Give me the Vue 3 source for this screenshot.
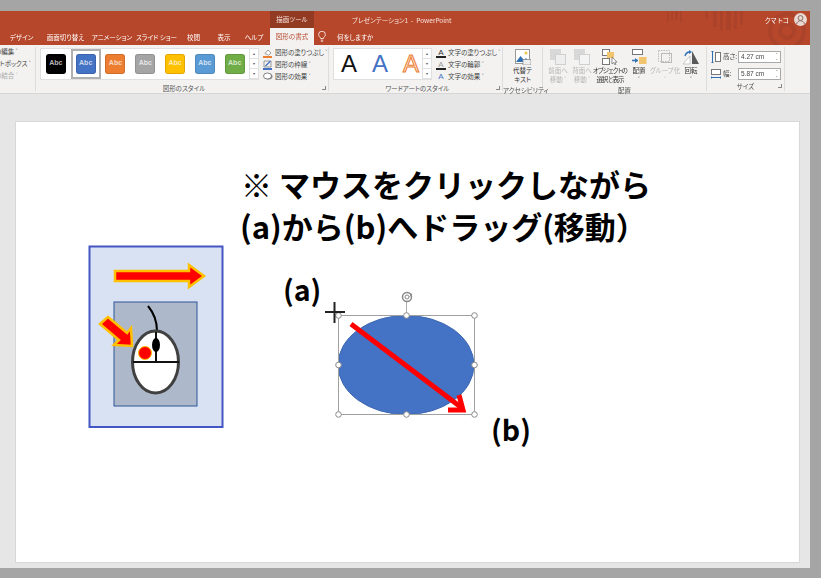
<template>
  <div class="window">
    <!-- タイトルバー -->
    <header class="title-bar">
      <svg class="title-deco" width="150" height="34" viewBox="0 0 150 34">
        <g fill="#ab432a">
          <rect x="7" y="0" width="2" height="11" />
          <rect x="11" y="0" width="2" height="10" />
          <rect x="15" y="0" width="3" height="9" />
          <rect x="20" y="0" width="2" height="11" />
          <rect x="45" y="0" width="3" height="8" />
          <rect x="53" y="0" width="4" height="16" />
          <rect x="60" y="0" width="3" height="19" />
          <rect x="66" y="0" width="5" height="19" />
          <rect x="74" y="0" width="3" height="18" />
          <rect x="80" y="0" width="3" height="14" />
        </g>
        <g fill="none" stroke="#ab432a">
          <circle cx="127" cy="20" r="17" stroke-width="4" />
          <circle cx="127" cy="20" r="7" stroke-width="4" />
        </g>
      </svg>
      <div class="context-tool">描画ツール</div>
      <div class="doc-title">プレゼンテーション1&nbsp;&nbsp;-&nbsp;&nbsp;PowerPoint</div>
      <div class="user">
        <span>クマ トコ</span>
        <svg width="13" height="13" viewBox="0 0 13 13">
          <circle cx="6.5" cy="6.5" r="6.5" fill="#e9d9d3" />
          <circle cx="6.5" cy="5" r="2.4" fill="none" stroke="#8c6f66" />
          <path d="M2.6 11c.6-2.400 2.200-3.200 3.900-3.200s3.300.8 3.900 3.200" fill="none" stroke="#8c6f66" />
        </svg>
      </div>
    </header>

    <!-- タブ -->
    <nav class="tabs">
      <span v-for="tab in tabs" :key="tab" class="tab" :class="{ active: tab === '図形の書式' }">{{ tab }}</span>
      <svg class="bulb" width="8" height="11" viewBox="0 0 8 11" fill="none" stroke="#fff" stroke-width=".8">
        <path d="M2.600 7.500C2.400 6 .6 5.400.6 3.600a3.400 3.400 0 0 1 6.800 0C7.400 5.400 5.600 6 5.400 7.500z" />
        <path d="M2.800 9.200h2.400M3.300 10.500h1.400" />
      </svg>
      <span class="tell-me">何をしますか</span>
    </nav>

    <!-- リボン -->
    <section class="ribbon">
      <div class="group group-cut">
        <div class="cut-list">
          <span>図形の編集 ˅</span>
          <span>テキストボックス ˅</span>
          <span class="muted">図形の結合 ˅</span>
        </div>
      </div>

      <div class="group group-shape">
        <div class="group-body">
          <div class="gallery shape-gallery">
            <div v-for="item in shapeStyles" :key="item.color" class="style-cell" :class="{ selected: item.selected }">
              <span class="swatch" :style="{ background: item.color }">Abc</span>
            </div>
            <div class="scroller">
              <span>▴</span><span>▾</span><span>▾</span>
            </div>
          </div>
          <ul class="commands">
            <li>
              <svg width="10" height="10" viewBox="0 0 10 10">
                <path d="M2 5.500 5 2l3 3-2.500 2.200z" fill="#fff" stroke="#777" stroke-width=".7" />
                <rect x="0" y="8" width="9" height="2" fill="#ed7d31" />
              </svg>
              図形の塗りつぶし ˅
            </li>
            <li>
              <svg width="10" height="10" viewBox="0 0 10 10">
                <path d="M1 1h7v6H1z" fill="none" stroke="#777" stroke-width=".7" />
                <path d="M2.500 6 7.500 1" stroke="#4472c4" stroke-width="1.200" />
                <rect x="0" y="8" width="9" height="2" fill="#4472c4" />
              </svg>
              図形の枠線 ˅
            </li>
            <li>
              <svg width="10" height="10" viewBox="0 0 10 10">
                <ellipse cx="5.500" cy="4.500" rx="4" ry="3" fill="#888" />
                <ellipse cx="4.500" cy="4" rx="4" ry="3" fill="#fff" stroke="#666" stroke-width=".8" />
              </svg>
              図形の効果 ˅
            </li>
          </ul>
        </div>
        <div class="group-label">図形のスタイル<i class="launcher"></i></div>
      </div>

      <div class="group group-word">
        <div class="group-body">
          <div class="gallery word-gallery">
            <span class="word-a black">A</span>
            <span class="word-a blue">A</span>
            <span class="word-a outline">A</span>
            <div class="scroller">
              <span>▴</span><span>▾</span><span>▾</span>
            </div>
          </div>
          <ul class="commands">
            <li><span class="text-icon">A</span>文字の塗りつぶし ˅</li>
            <li><span class="text-icon light">A</span>文字の輪郭 ˅</li>
            <li><span class="text-icon effect">A</span>文字の効果 ˅</li>
          </ul>
        </div>
        <div class="group-label">ワードアートのスタイル<i class="launcher"></i></div>
      </div>

      <div class="group group-alt">
        <div class="group-body big-row">
          <div class="big-btn">
            <svg width="16" height="16" viewBox="0 0 16 16">
              <rect x=".5" y=".5" width="14" height="14" fill="#fff" stroke="#999" />
              <circle cx="11" cy="4" r="1.500" fill="#f2c14e" />
              <path d="M1 13 5.500 7 9 11l2-2 3 4z" fill="#2f6fb3" />
              <rect x="8" y="10.500" width="8" height="5.500" fill="#eee" stroke="#888" stroke-width=".7" />
            </svg>
            <span>代替テ<br />キスト</span>
          </div>
        </div>
        <div class="group-label">アクセシビリティ</div>
      </div>

      <div class="group group-arrange">
        <div class="group-body big-row">
          <div class="big-btn narrow disabled">
            <svg width="16" height="16" viewBox="0 0 16 16">
              <rect x="0" y="0" width="11" height="11" fill="#d8d8d8" />
              <rect x="5.500" y="5.500" width="10" height="10" fill="#eee" stroke="#d0d0d0" />
            </svg>
            <span>前面へ<br />移動 ˅</span>
          </div>
          <div class="big-btn narrow disabled">
            <svg width="16" height="16" viewBox="0 0 16 16">
              <rect x="0" y="0" width="11" height="11" fill="#d8d8d8" />
              <rect x="5.500" y="5.500" width="10" height="10" fill="#f4f4f4" stroke="#d0d0d0" />
            </svg>
            <span>背面へ<br />移動 ˅</span>
          </div>
          <div class="big-btn wide">
            <svg width="16" height="16" viewBox="0 0 16 16">
              <rect x=".5" y=".5" width="7" height="6" fill="#fff" stroke="#777" />
              <rect x="5" y="3" width="7" height="6" fill="#f2c46d" />
              <rect x=".5" y="9.500" width="7" height="6" fill="#fff" stroke="#777" />
              <path d="M10 8v7l1.700-1.500 1.300 2.500 1-.5-1.200-2.400H15z" fill="#fff" stroke="#666" stroke-width=".7" />
            </svg>
            <span>オブジェクトの<br />選択と表示</span>
          </div>
          <div class="big-btn medium">
            <svg width="16" height="16" viewBox="0 0 16 16">
              <rect x="1.500" y=".5" width="10" height="5" fill="#fff" stroke="#777" />
              <rect x="8" y="8" width="7.500" height="7" fill="#f2c46d" />
              <path d="M1 11.500h6" stroke="#2f6fb3" stroke-width="1.500" />
              <path d="M4 9l3 2.500-3 2.500z" fill="#2f6fb3" />
            </svg>
            <span>配置<br />˅</span>
          </div>
          <div class="big-btn medium disabled">
            <svg width="16" height="16" viewBox="0 0 16 16" fill="none" stroke="#bbb">
              <path d="M1.500 1.500h11v11h-11z" stroke-dasharray="1.500 1" />
              <rect x="4.500" y="4.500" width="10" height="9" />
            </svg>
            <span>グループ化<br />˅</span>
          </div>
          <div class="big-btn medium">
            <svg width="16" height="16" viewBox="0 0 16 16">
              <path d="M9 2v13h7z" fill="#595959" />
              <path d="M7 15H0l7-8z" fill="#fff" stroke="#aaa" stroke-width=".6" />
              <path d="M2 7q1-4 5-4" fill="none" stroke="#2f6fb3" stroke-width="1.300" />
              <path d="M6 1l3 2-3 2z" fill="#2f6fb3" />
            </svg>
            <span>回転<br />˅</span>
          </div>
        </div>
        <div class="group-label">配置</div>
      </div>

      <div class="group group-size">
        <div class="group-body size-rows">
          <div class="size-row">
            <svg width="10" height="12" viewBox="0 0 10 12">
              <path d="M1.500 0v12" stroke="#2f6fb3" />
              <path d="M0 0h3M0 12h3" stroke="#2f6fb3" />
              <rect x="4.500" y="1.500" width="5" height="9" fill="#fff" stroke="#777" />
            </svg>
            <span class="size-label">高さ:</span>
            <div class="spin"><span>4.27 cm</span><b>⌃<br />⌄</b></div>
          </div>
          <div class="size-row">
            <svg width="10" height="12" viewBox="0 0 10 12">
              <rect x=".5" y="1.500" width="9" height="5" fill="#fff" stroke="#777" />
              <path d="M0 9.500h10" stroke="#2f6fb3" />
              <path d="M0 8v3M10 8v3" stroke="#2f6fb3" />
            </svg>
            <span class="size-label">幅:</span>
            <div class="spin"><span>5.87 cm</span><b>⌃<br />⌄</b></div>
          </div>
        </div>
        <div class="group-label">サイズ<i class="launcher"></i></div>
      </div>
    </section>

    <!-- 編集領域 -->
    <main class="workspace">
      <div class="slide">
        <svg class="canvas" width="783" height="440" viewBox="16 122 783 440">
          <!-- 左の説明図 -->
          <rect x="89.500" y="246.500" width="133" height="180.500" fill="#d9e2f3" stroke="#4455c4" stroke-width="2" />
          <rect x="114" y="302" width="83" height="104" fill="#adb9ca" stroke="#2f5597" />
          <path d="M115 271h74v-6l15 11-15 11v-6h-74z" fill="#f00" stroke="#ffc000" stroke-width="2.500" />
          <path d="M108 317l19 16 4-5 1 18-18-1 5-5-19-16z" fill="#f00" stroke="#ffc000" stroke-width="2.500" />
          <path d="M148 306c5 6 9 14 9 25" fill="none" stroke="#000" stroke-width="2" />
          <ellipse cx="155.500" cy="362" rx="23" ry="31" fill="#fff" stroke="#404040" stroke-width="3" />
          <path d="M133 362h46M156 332v30" stroke="#111" stroke-width="2" />
          <ellipse cx="156" cy="345" rx="4" ry="7" fill="#000" />
          <circle cx="145" cy="353" r="6.500" fill="#f00" stroke="#ffc000" />

          <!-- 選択中の楕円 -->
          <ellipse cx="406" cy="365" rx="68" ry="49.500" fill="#4472c4" stroke="#3e68b2" />
          <rect x="338.500" y="315.500" width="136" height="99" fill="none" stroke="#a0a0a0" />
          <path d="M406.500 315v-13" stroke="#b0b0b0" />
          <circle cx="407" cy="297" r="4.500" fill="none" stroke="#888" stroke-width="1.500" />
          <circle cx="407" cy="297" r="2" fill="none" stroke="#888" />
          <path d="M409 293l3 1.500-2.500 2" fill="none" stroke="#888" />
          <circle v-for="h in handles" :key="h[0] + '-' + h[1]" :cx="h[0]" :cy="h[1]" r="2.800" fill="#fff" stroke="#8a8a8a" />
          <path d="M351 324l111 84" stroke="#f00" stroke-width="5" />
          <path d="M459 395l4 15-15 0" fill="none" stroke="#f00" stroke-width="5" />
          <path d="M325 312h20M334.500 302v21" stroke="#222" stroke-width="2" />
        </svg>
        <p class="headline line-1">※ マウスをクリックしながら</p>
        <p class="headline line-2">(a)から(b)へドラッグ(移動）</p>
        <span class="point point-a">(a)</span>
        <span class="point point-b">(b)</span>
      </div>
    </main>
  </div>
</template>

<script setup>
const tabs = ['デザイン', '画面切り替え', 'アニメーション', 'スライド ショー', '校閲', '表示', 'ヘルプ', '図形の書式']

const shapeStyles = [
  { color: '#000000' },
  { color: '#4472c4', selected: true },
  { color: '#ed7d31' },
  { color: '#a5a5a5' },
  { color: '#ffc000' },
  { color: '#5b9bd5' },
  { color: '#70ad47' }
]

// 選択枠のハンドル位置
const handles = [
  [338.5, 315.5], [406.5, 315.5], [474.5, 315.5],
  [338.5, 365], [474.5, 365],
  [338.5, 414.5], [406.5, 414.5], [474.5, 414.5]
]
</script>

<style>
html,
body {
  margin: 0;
  background: #a5a5a5;
  overflow: hidden;
}
</style>

<style scoped>
.window {
  width: 810px;
  height: 557px;
  margin-top: 11px;
  display: flex;
  flex-direction: column;
  font-family: "Noto Sans CJK JP", "Noto Sans", sans-serif;
  font-size: 6.5px;
  font-feature-settings: "palt";
  color: #444;
}

.title-bar {
  position: relative;
  z-index: 1;
  height: 17px;
  flex: none;
  display: flex;
  align-items: center;
  background: #b7472a;
  color: #f6e4de;
  padding-left: 270px;
  filter: blur(.3px);
}

.title-deco {
  position: absolute;
  right: 0;
  top: 0;
}

.context-tool {
  width: 44px;
  height: 17px;
  line-height: 17px;
  text-align: center;
  background: #933a22;
}

.doc-title {
  margin-left: 38px;
  white-space: nowrap;
}

.user {
  position: relative;
  margin-left: auto;
  margin-right: 3px;
  display: flex;
  align-items: center;
  gap: 5px;
  color: #fff;
}

.tabs {
  height: 17px;
  flex: none;
  display: grid;
  grid-template-columns: 43px 45px 48px 41px 33px 28px 32px 44px 16px auto;
  align-items: center;
  justify-items: center;
  background: #b7472a;
  color: #fff;
  filter: blur(.3px);
}

.tab {
  white-space: nowrap;
}

.tab.active {
  justify-self: stretch;
  height: 17px;
  line-height: 17px;
  text-align: center;
  background: #f3f2f1;
  color: #b7472a;
}

.tell-me {
  justify-self: start;
  margin-left: 7px;
}

.ribbon {
  height: 49px;
  flex: none;
  display: flex;
  background: #f3f2f1;
  border-bottom: 1px solid #d6d6d6;
  box-sizing: border-box;
  line-height: 1.2;
  filter: blur(.3px);
}

.group {
  position: relative;
  flex: none;
  display: flex;
  flex-direction: column;
  box-sizing: border-box;
  border-right: 1px solid #dcdcdc;
  margin: 2px 0;
}

.group-cut { width: 36px; overflow: hidden; }
.group-shape { width: 293px; padding-left: 4px; }
.group-word { width: 174px; padding-left: 4px; }
.group-alt { width: 40px; }
.group-arrange { width: 164px; }
.group-size { width: 78px; }

.cut-list {
  display: flex;
  flex-direction: column;
  align-items: flex-start;
  gap: 4px;
  margin-left: -18px;
  padding-top: 1px;
  white-space: nowrap;
}

.muted { color: #aaa; }

.group-body {
  height: 37px;
  display: flex;
}

.group-label {
  position: relative;
  flex: 1;
  text-align: center;
  line-height: 12px;
  color: #555;
  white-space: nowrap;
}

.launcher {
  position: absolute;
  right: 2px;
  top: 4px;
  width: 3px;
  height: 3px;
  border-right: 1px solid #888;
  border-bottom: 1px solid #888;
}

.gallery {
  position: relative;
  display: flex;
  align-items: center;
  box-sizing: border-box;
  height: 32px;
  margin-top: 1px;
  background: #fff;
  border: 1px solid #e0e0e0;
}

.shape-gallery {
  width: 219px;
}

.style-cell {
  width: 29.800px;
  height: 30px;
  flex: none;
  box-sizing: border-box;
  display: flex;
  align-items: center;
  justify-content: center;
}

.style-cell.selected {
  border: 2px solid #b0b0b0;
}

.swatch {
  width: 20px;
  height: 20px;
  border-radius: 3px;
  box-shadow: inset 0 0 0 1px rgba(0, 0, 0, .12);
  color: rgba(255, 255, 255, .72);
  font-family: "Liberation Sans", sans-serif;
  font-size: 7px;
  font-weight: 700;
  line-height: 17px;
  text-align: center;
}

.scroller {
  position: absolute;
  right: 0;
  top: 0;
  bottom: 0;
  width: 8px;
  display: flex;
  flex-direction: column;
  border-left: 1px solid #e0e0e0;
  font-size: 4px;
  color: #555;
}

.scroller span {
  flex: 1;
  display: flex;
  align-items: center;
  justify-content: center;
  border-bottom: 1px solid #e0e0e0;
}

.commands {
  list-style: none;
  margin: 0;
  padding: 1px 0 0 4px;
  display: flex;
  flex-direction: column;
  gap: 2px;
}

.commands li {
  height: 10px;
  display: flex;
  align-items: center;
  gap: 2px;
  white-space: nowrap;
}

.word-gallery {
  width: 99px;
  padding-left: 6px;
  gap: 13px;
}

.word-a {
  width: 18px;
  text-align: center;
  font-family: "Liberation Sans", sans-serif;
  font-size: 24px;
  line-height: 30px;
}

.word-a.black { color: #111; }
.word-a.blue { color: #4472c4; }

.word-a.outline {
  color: #fbe5d6;
  -webkit-text-stroke: 1px #ed7d31;
}

.text-icon {
  width: 10px;
  height: 9px;
  flex: none;
  box-sizing: border-box;
  border-bottom: 2px solid #222;
  text-align: center;
  font-family: "Liberation Sans", sans-serif;
  font-size: 8px;
  line-height: 7px;
  color: #333;
}

.text-icon.light { color: #999; }

.text-icon.effect {
  border: none;
  color: #4472c4;
}

.big-row {
  justify-content: center;
}

.group-arrange .big-row {
  justify-content: flex-start;
  padding-left: 3px;
}

.big-btn {
  display: flex;
  flex-direction: column;
  align-items: center;
  gap: 1px;
  white-space: nowrap;
  text-align: center;
  line-height: 9px;
  color: #333;
  padding-top: 2px;
}

.big-btn.disabled {
  color: #b5b5b5;
}

.narrow { width: 24px; }
.wide { width: 32px; letter-spacing: -.9px; }
.medium { width: 26px; }

.size-rows {
  flex-direction: column;
  gap: 5px;
  padding: 4px 0 0 4px;
}

.size-row {
  display: flex;
  align-items: center;
  height: 12px;
}

.size-label {
  width: 17px;
  padding-left: 2px;
  box-sizing: border-box;
}

.spin {
  width: 43px;
  height: 12px;
  box-sizing: border-box;
  display: flex;
  align-items: center;
  justify-content: space-between;
  padding: 0 2px;
  background: #fff;
  border: 1px solid #a9a9a9;
  font-family: "Liberation Sans", sans-serif;
  font-size: 6.500px;
}

.spin b {
  font-weight: 400;
  font-size: 4px;
  line-height: 4px;
  color: #777;
}

.workspace {
  flex: 1;
  box-sizing: border-box;
  padding: 28px 0 0 16px;
  background: #e6e6e6;
}

.slide {
  position: relative;
  width: 783px;
  height: 440px;
  background: #fff;
  box-shadow: 0 0 0 1px #d8d8d8;
  font-feature-settings: normal;
}

.canvas {
  position: absolute;
  left: 0;
  top: 0;
}

.headline {
  position: absolute;
  margin: 0;
  font-size: 31px;
  font-weight: 700;
  line-height: 42px;
  color: #000;
  white-space: nowrap;
}

.line-1 { left: 225px; top: 41px; }
.line-2 { left: 224px; top: 83px; }

.point {
  position: absolute;
  font-size: 28.500px;
  font-weight: 700;
  line-height: 36px;
  color: #000;
}

.point-a { left: 267px; top: 149px; }
.point-b { left: 475px; top: 289px; }
</style>
